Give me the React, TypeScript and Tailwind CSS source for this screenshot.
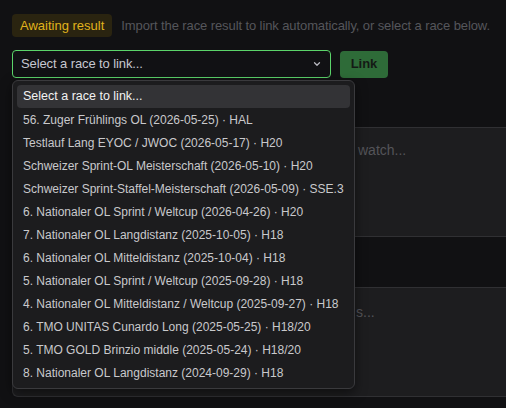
const races = [
  "56. Zuger Frühlings OL (2026-05-25) · HAL",
  "Testlauf Lang EYOC / JWOC (2026-05-17) · H20",
  "Schweizer Sprint-OL Meisterschaft (2026-05-10) · H20",
  "Schweizer Sprint-Staffel-Meisterschaft (2026-05-09) · SSE.3",
  "6. Nationaler OL Sprint / Weltcup (2026-04-26) · H20",
  "7. Nationaler OL Langdistanz (2025-10-05) · H18",
  "6. Nationaler OL Mitteldistanz (2025-10-04) · H18",
  "5. Nationaler OL Sprint / Weltcup (2025-09-28) · H18",
  "4. Nationaler OL Mitteldistanz / Weltcup (2025-09-27) · H18",
  "6. TMO UNITAS Cunardo Long (2025-05-25) · H18/20",
  "5. TMO GOLD Brinzio middle (2025-05-24) · H18/20",
  "8. Nationaler OL Langdistanz (2024-09-29) · H18",
];

export default function App() {
  return (
    <div className="relative w-[506px] h-[408px] overflow-hidden bg-[#111113] font-['Liberation_Sans',Arial,sans-serif] text-[13px]">
      <div className="pl-3 pt-[14px]">
        <div className="flex items-center gap-[9px]">
          <span className="h-[23px] px-2 flex items-center rounded-[4px] bg-[#2a2410] text-[#e0b31c]">Awaiting result</span>
          <span className="text-[#55565b] whitespace-nowrap tracking-[-0.1px]">Import the race result to link automatically, or select a race below.</span>
        </div>

        <div className="mt-[13px] flex items-center gap-[9px]">
          <div className="w-[319px] h-[28px] rounded-[4px] border border-[#5bd46a] bg-[#111114] flex items-center justify-between pl-2 pr-2 text-[#c5c7d0]">
            <span className="tracking-[-0.1px]">Select a race to link...</span>
            <svg width="10" height="10" viewBox="0 0 24 24" fill="none" stroke="#b8b8c0" strokeWidth="3" strokeLinecap="round" strokeLinejoin="round">
              <path d="M6 9l6 6 6-6" />
            </svg>
          </div>
          <button className="h-[27px] w-[48px] rounded-[4px] bg-[#2e6b38] text-[#141a15] font-bold">Link</button>
        </div>

        <div className="mt-[49px] flex flex-col gap-[50px]">
          <div className="h-[110px] rounded-l-[6px] border border-r-0 border-[#303033] bg-[#1d1d1f] pt-[12px]">
            <div className="pl-[345px] text-[#545459] text-[14px]">watch...</div>
          </div>
          <div className="h-[110px] rounded-l-[6px] border border-r-0 border-[#303033] bg-[#1d1d1f] pt-[14px]">
            <div className="pl-[343px] text-[#545459] text-[14px]">s...</div>
          </div>
        </div>
      </div>

      <div className="absolute left-[12px] top-[80px] w-[343px] rounded-[6px] border border-[#3a3a3d] bg-[#1c1c1e] p-1 text-[12px] shadow-[0_4px_12px_rgba(0,0,0,0.5)]">
        <div className="h-[23px] flex items-center px-[6px] rounded-[4px] bg-[#333336] text-[#f2f2f2] text-[12.5px]">Select a race to link...</div>
        {races.map((r) => (
          <div key={r} className="h-[23px] flex items-center px-[6px] text-[#c9c9cc] whitespace-nowrap">{r}</div>
        ))}
      </div>
    </div>
  );
}
